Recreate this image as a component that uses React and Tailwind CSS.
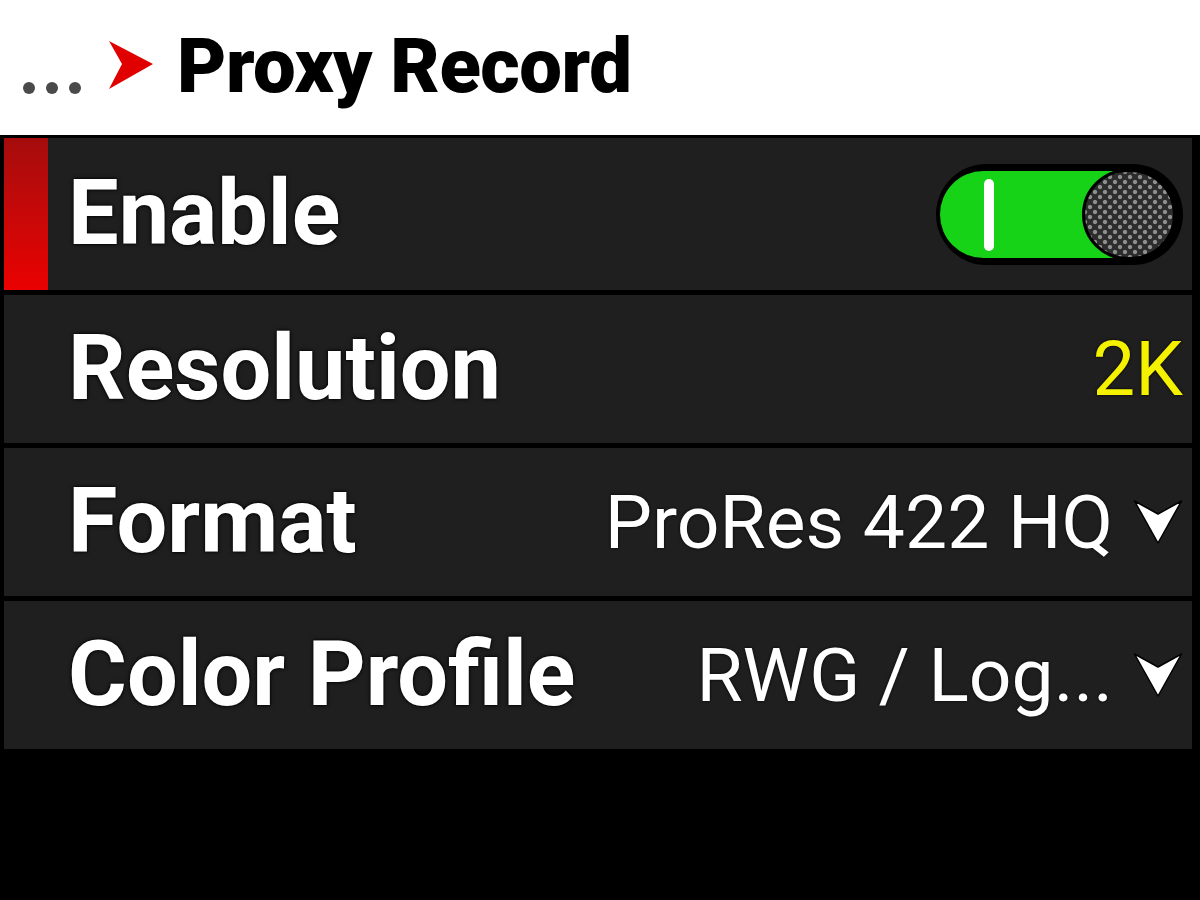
import React from "react";

const font = { fontFamily: "Roboto, 'Noto Sans', 'Liberation Sans', sans-serif" };

function Chevron() {
  return (
    <svg width="50" height="46" viewBox="0 0 50 46" className="shrink-0">
      <path d="M1.5 2 L25 15 L48.5 2 L25 44 Z" fill="#fff" stroke="#000" strokeWidth="1.5" strokeLinejoin="round" />
    </svg>
  );
}

function RedArrow() {
  return (
    <svg width="46" height="50" viewBox="0 0 46 50" className="shrink-0">
      <path d="M1 1 L45 24 L1 49 L14 24 Z" fill="#e00000" strokeLinejoin="round" />
    </svg>
  );
}

function Toggle() {
  return (
    <div className="relative w-[247px] h-[101px] rounded-full bg-black shrink-0">
      <div className="absolute left-[4px] top-[7px] bottom-[7px] right-[70px] rounded-l-full bg-[#17d317]" />
      <div className="absolute left-[48px] top-[15px] w-[10px] h-[72px] rounded-full bg-white" />
      <div className="absolute right-[7px] top-[5px] w-[94px] h-[91px] rounded-full border-[3px] border-black bg-[#2c2c2c] bg-[radial-gradient(circle,#8e8e8e_1.6px,transparent_2.6px),radial-gradient(circle,#8e8e8e_1.6px,transparent_2.6px)] bg-size-[10px_10px] bg-position-[0_0,5px_5px]" />
    </div>
  );
}

function Row({ label, children, active, h = "h-[149px]" }) {
  return (
    <div className={`relative flex items-center ${h} bg-[#1f1f1f]`}>
      {active ? (
        <div className="w-[44px] self-stretch bg-gradient-to-b from-[#a50c0c] to-[#ea0000] shrink-0" />
      ) : (
        <div className="w-[44px] shrink-0" />
      )}
      <div className="pl-[20px] text-white font-bold text-[90px] leading-none [text-shadow:0_0_4px_#000,0_0_2px_#000]">
        {label}
      </div>
      <div className="ml-auto pr-[9px] flex items-center gap-[20px]">{children}</div>
    </div>
  );
}

export default function App() {
  return (
    <div className="w-[1200px] h-[900px] bg-black flex flex-col overflow-hidden" style={font}>
      <header className="h-[135px] bg-white flex items-center pl-[23px] shrink-0">
        <div className="flex gap-[11px] mt-[40px]">
          <span className="w-[12px] h-[12px] rounded-full bg-[#4a4a4a]" />
          <span className="w-[12px] h-[12px] rounded-full bg-[#4a4a4a]" />
          <span className="w-[12px] h-[12px] rounded-full bg-[#4a4a4a]" />
        </div>
        <div className="ml-[27px] mt-[-5px]">
          <RedArrow />
        </div>
        <div className="ml-[23px] text-black font-black text-[76px] leading-none tracking-[-0.5px] mt-[-4px]">
          Proxy Record
        </div>
      </header>
      <div className="flex flex-col gap-[5px] pt-[3px] pl-[4px] pr-[8px]">
        <Row label="Enable" active h="h-[152px]">
          <Toggle />
        </Row>
        <Row label="Resolution" h="h-[148px]">
          <span className="text-[#f5f200] text-[76px] leading-none [text-shadow:0_0_3px_#000]">2K</span>
        </Row>
        <Row label="Format" h="h-[148px]">
          <span className="text-white text-[75px] leading-none [text-shadow:0_0_3px_#000]">ProRes 422 HQ</span>
          <Chevron />
        </Row>
        <Row label="Color Profile" h="h-[148px]">
          <span className="text-white text-[75px] leading-none [text-shadow:0_0_3px_#000]">RWG / Log...</span>
          <Chevron />
        </Row>
      </div>
    </div>
  );
}
